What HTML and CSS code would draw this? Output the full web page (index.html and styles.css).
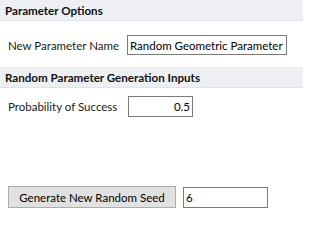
FILE: index.html
```html
<!DOCTYPE html>
<html>
<head>
<meta charset="utf-8">
<link rel="stylesheet" href="styles.css">
</head>
<body>
<div class="panel">
  <div class="hdr">Parameter Options</div>
  <div class="row row-name">
    <span class="lbl lbl-name">New Parameter Name</span>
    <div class="box box-name">Random Geometric Parameter</div>
  </div>
  <div class="hdr hdr2">Random Parameter Generation Inputs</div>
  <div class="row row-prob">
    <span class="lbl lbl-prob">Probability of Success</span>
    <div class="box box-prob">0.5</div>
  </div>
  <div class="row row-seed">
    <div class="btn">Generate New Random Seed</div>
    <div class="box box-seed">6</div>
  </div>
</div>
</body>
</html>
```
FILE: styles.css
```css
html, body {
  margin: 0;
  padding: 0;
  background: #ffffff;
}
body {
  font-family: Lato, "Noto Sans", sans-serif;
  font-size: 11.5px;
  color: #1b1b1b;
  width: 303px;
  height: 224px;
  overflow: hidden;
}
.panel {
  display: flex;
  flex-direction: column;
}
.hdr {
  height: 20px;
  background: #eeeff3;
  border-bottom: 1px solid #e2e3e8;
  padding-left: 5px;
  display: flex;
  align-items: center;
  font-weight: bold;
  font-size: 11.6px;
  color: #111;
  white-space: nowrap;
}
.hdr2 {
  margin-top: 12px;
}
.row {
  display: flex;
  align-items: center;
  padding-left: 8px;
  white-space: nowrap;
}
.row-name {
  margin-top: 14px;
}
.row-prob {
  margin-top: 8px;
}
.row-seed {
  margin-top: 69px;
}
.lbl {
  display: block;
  flex: none;
}
.lbl-name {
  width: 119px;
}
.lbl-prob {
  width: 120px;
}
.box {
  box-sizing: border-box;
  flex: none;
  border: 1px solid #7a7a7a;
  background: #fff;
  display: flex;
  align-items: center;
  padding: 0 2px;
  color: #000;
  white-space: nowrap;
  overflow: hidden;
}
.box-name {
  width: 160px;
  height: 20px;
}
.box-prob {
  width: 65px;
  height: 21px;
  justify-content: flex-end;
}
.box-seed {
  width: 85px;
  height: 21px;
  margin-left: 7px;
}
.btn {
  box-sizing: border-box;
  flex: none;
  width: 168px;
  height: 22px;
  background: #e1e1e1;
  border: 1px solid #adadad;
  display: flex;
  align-items: center;
  justify-content: center;
  color: #000;
}
```
